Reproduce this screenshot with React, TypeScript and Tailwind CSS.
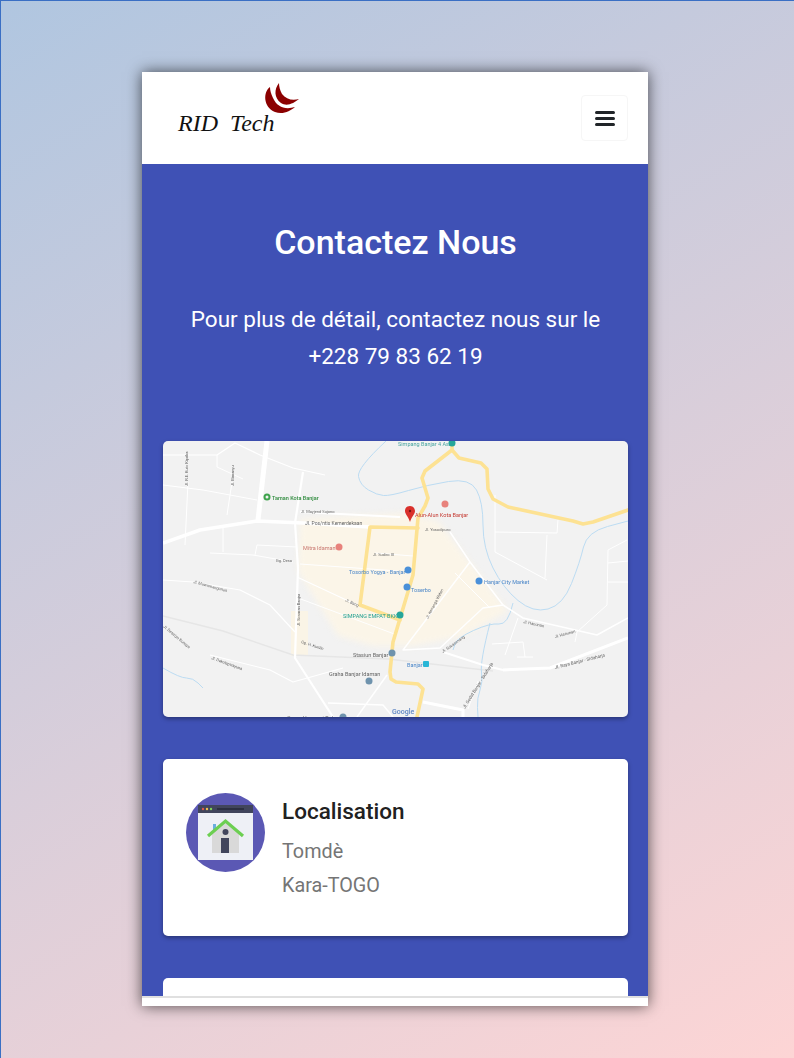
const roads: [string, number][] = [
  ['M0 102 L37 89 L94 80 L140 82 L207 86', 3.5],
  ['M104 0 L95 79', 5],
  ['M0 14 L54 14 L72 2 L97 14 L130 27 L162 34', 1.2],
  ['M54 14 L54 26 L80 38', 1],
  ['M137 71 L237 76', 2],
  ['M140 31 L132 82 L135 127 L132 217 L170 276', 2.2],
  ['M0 44 L40 49 L94 59', 1],
  ['M25 41 L22 104', 1],
  ['M69 41 L64 74', 1],
  ['M60 86 L60 111', 1],
  ['M47 112 L90 114 L130 121', 1],
  ['M92 114 L94 104 L134 106', 1],
  ['M0 139 L30 141 L77 149 L107 164 L132 191', 1.2],
  ['M134 136 L194 164', 1.2],
  ['M135 157 L234 194', 1],
  ['M47 214 L107 229 L130 241 L180 227', 1.2],
  ['M194 276 L224 234', 1.5],
  ['M165 262 L220 264 L230 276', 1.5],
  ['M137 123 L235 130', 1],
  ['M212 112 L250 115', 1],
  ['M260 261 L300 269 L300 276', 3],
  ['M287 91 L307 121 L340 164 L360 177 L434 194 L465 177', 1.5],
  ['M307 121 L240 209 L277 207 L320 167 L340 164', 1.4],
  ['M292 132 L327 167', 1],
  ['M280 211 L320 224 L340 229', 2],
  ['M340 229 L387 227 L465 197', 3],
  ['M332 54 L332 111 L384 139', 1],
  ['M332 91 L394 92 L395 79', 1],
  ['M384 94 L382 137', 1],
  ['M464 99 L445 109 L444 164 L414 191 L412 201', 1],
  ['M445 122 L465 120 M445 141 L465 141', 1],
  ['M355 177 L342 214 M329 203 L360 201 L362 216 M354 216 L370 216', 1],
  ['M315 240 L305 268', 1],
]

const highways: string[] = [
  'M289 0 L289 9 L262 30 L259 37 L265 57 L262 65 L255 77 L250 134 L230 201 L227 231 L228 238 L233 241 L255 243 L260 248 L254 276',
  'M289 9 L296 17 L318 22 L324 28 L325 48 L330 58 L345 66 L410 80 L420 83 L430 81 L465 69',
  'M255 87 L207 86 L197 164 L237 179',
]

type Pt = [number, number]

// rounds a polyline through the midpoints of its segments
function smooth(pts: Pt[]) {
  let d = `M${pts[0][0]} ${pts[0][1]}`
  for (let i = 1; i < pts.length - 1; i++) {
    const mx = (pts[i][0] + pts[i + 1][0]) / 2
    const my = (pts[i][1] + pts[i + 1][1]) / 2
    d += ` Q${pts[i][0]} ${pts[i][1]} ${mx} ${my}`
  }
  const last = pts[pts.length - 1]
  return `${d} L${last[0]} ${last[1]}`
}

const water: Pt[][] = [
  [[223, 0], [194, 27], [197, 44], [214, 54], [227, 55], [264, 44], [307, 37], [320, 61], [320, 107], [340, 147], [370, 172], [400, 164], [417, 121], [424, 91], [465, 80]],
  [[350, 162], [345, 184], [327, 182], [294, 197], [290, 209]],
  [[327, 182], [317, 221], [320, 241], [314, 257], [315, 276]],
  [[0, 227], [17, 237], [30, 237], [40, 247]],
]

// static map, real text labels
function MapImage() {
  return (
    <svg viewBox="0 0 465 276" className="block h-full w-full blur-[0.35px]">
      <rect width="465" height="276" fill="#f2f2f2" />
      <path d="M137 78 L240 72 L275 80 L345 170 L300 195 L250 205 L210 205 L175 195 L135 130Z" fill="#fbf5e8" className="blur-[3px]" />
      <path d="M128 170 L145 170 L145 215 L128 215Z" fill="#faf4e6" />
      <path d="M0 175 L60 190 L130 214 L225 218 L330 230" fill="none" stroke="#e6e6e6" strokeWidth="1.5" />
      {water.map((pts, i) => (
        <path key={i} d={smooth(pts)} fill="none" stroke="#bcdcf2" strokeWidth="1" />
      ))}
      {roads.map(([d, w], i) => (
        <path key={i} d={d} fill="none" stroke="#ffffff" strokeWidth={w} strokeLinejoin="round" />
      ))}
      {highways.map((d, i) => (
        <path key={i} d={d} fill="none" stroke="#fde293" strokeWidth="3.6" strokeLinecap="round" strokeLinejoin="round" />
      ))}
      <g fontFamily="Roboto, sans-serif" fontSize="5" fill="#666666">
        <text x="142" y="84">Jl. Pos/ntis Kemerdekaan</text>
        <text x="138" y="72" fontSize="4">Jl. Mayjend Sujono</text>
        <text x="113" y="121" fontSize="4">Gg. Desa</text>
        <text x="262" y="90" fontSize="4">Jl. Yosodipuro</text>
        <text x="210" y="115" fontSize="4">Jl. Sudiro III</text>
        <text x="360" y="182" fontSize="4" transform="rotate(12 360 182)">Jl. Hanunan</text>
        <text x="392" y="197" fontSize="4" transform="rotate(-15 392 197)">Jl. Hanunan</text>
        <text x="392" y="228" fontSize="4.5" transform="rotate(-14 392 228)">Jl. Raya Banjar - Sidaharja</text>
        <text x="302" y="268" fontSize="4.5" transform="rotate(-58 302 268)">Jl. Gedal Banjar - Sidaharja</text>
        <text x="30" y="142" fontSize="4" transform="rotate(15 30 142)">Jl. Mawamangunan</text>
        <text x="48" y="218" fontSize="4" transform="rotate(20 48 218)">Jl. Dakulaptrayuna</text>
        <text x="0" y="186" fontSize="4" transform="rotate(40 0 186)">Jl. Desatyo Bunaya</text>
        <text x="25" y="45" fontSize="4" transform="rotate(-90 25 45)">Jl. R.E. Kuto Kiprika</text>
        <text x="71" y="45" fontSize="4" transform="rotate(-90 71 45)">Jl. Bimanyu</text>
        <text x="137" y="185" fontSize="4" transform="rotate(-90 137 185)">Jl. Sosaran Banjar</text>
        <text x="138" y="202" fontSize="4" transform="rotate(18 138 202)">Gg. H. Kurdin</text>
        <text x="182" y="160" fontSize="4" transform="rotate(25 182 160)">Jl. Bang</text>
        <text x="265" y="178" fontSize="4" transform="rotate(-62 265 178)">Jl. Kenanga Wetan</text>
        <text x="280" y="212" fontSize="4" transform="rotate(-35 280 212)">Jl. Sukasenang</text>
      </g>
      <g fontFamily="Roboto, sans-serif" fontSize="5.5">
        <text x="109" y="59" fill="#2e8b3d" fontWeight="500">Taman Kota Banjar</text>
        <text x="140" y="109" fill="#c9766f">Mitra Idaman</text>
        <text x="186" y="133" fill="#4a86c8">Tosorbo Yogya - Banjar</text>
        <text x="180" y="177" fill="#1f9e8f">SIMPANG EMPAT BKK</text>
        <text x="190" y="216" fill="#666666">Stasiun Banjar</text>
        <text x="166" y="235" fill="#666666">Graha Banjar Idaman</text>
        <text x="124" y="279" fill="#666666">Green Harmoni Bahari</text>
        <text x="252" y="76" fill="#c53a32">Alun-Alun Kota Banjar</text>
        <text x="321" y="143" fill="#4a86c8">Hanjar City Market</text>
        <text x="248" y="151" fill="#4a86c8">Toserbo</text>
        <text x="244" y="226" fill="#4a86c8">Banjar</text>
        <text x="235" y="5" fill="#4aa5a0">Simpang Banjar 4 Ase</text>
      </g>
      <text x="229" y="273" fontFamily="Roboto, sans-serif" fontSize="7" fontWeight="500" fill="#5f86c4">Google</text>
      <circle cx="104" cy="56" r="3.500" fill="#3fa34d" />
      <circle cx="104" cy="56" r="1.500" fill="#f2f2f2" />
      <circle cx="176" cy="106" r="3.500" fill="#e8827c" />
      <circle cx="282" cy="63" r="3.500" fill="#e8827c" />
      <circle cx="244" cy="146" r="3.500" fill="#4a90d9" />
      <circle cx="316" cy="140" r="3.500" fill="#4a90d9" />
      <circle cx="245" cy="129" r="3.500" fill="#4a90d9" />
      <circle cx="237" cy="174" r="3.500" fill="#26a69a" />
      <circle cx="229" cy="212" r="3.500" fill="#6f93ad" />
      <circle cx="206" cy="240" r="3.500" fill="#6f93ad" />
      <circle cx="180" cy="276" r="3.500" fill="#6f93ad" />
      <circle cx="289" cy="2" r="3.500" fill="#26a69a" />
      <rect x="260" y="220" width="6" height="6" rx="1" fill="#29b6d6" />
      <path d="M247 65 C243 65 242 68 242 70 C242 73 245.500 76 247 81 C248.500 76 252 73 252 70 C252 68 250.500 65 247 65Z" fill="#d9302b" />
      <circle cx="247" cy="70" r="1.200" fill="#7a1512" />
    </svg>
  )
}

function HouseIcon() {
  return (
    <svg viewBox="0 0 79 79" className="h-[79px] w-[79px] shrink-0">
      <circle cx="39.500" cy="39.500" r="39.500" fill="#5b58b4" />
      <rect x="12" y="12" width="55" height="55" fill="#eef0f6" />
      <rect x="12" y="12" width="55" height="8" fill="#41455c" />
      <circle cx="17" cy="16" r="1.200" fill="#e05a4d" />
      <circle cx="21" cy="16" r="1.200" fill="#f2c14e" />
      <circle cx="25" cy="16" r="1.200" fill="#7ed35b" />
      <rect x="31" y="15" width="27" height="2" fill="#2c2f42" />
      <rect x="27" y="31" width="3" height="6" fill="#6aaede" />
      <path d="M26 40 L39.500 29 L53 40 V60 H26Z" fill="#d9d9d9" />
      <path d="M22 43 L39.500 28 L57 43" fill="none" stroke="#6ccf52" strokeWidth="3.200" />
      <circle cx="39.500" cy="39" r="3" fill="#41455c" />
      <rect x="35" y="45" width="8" height="15" fill="#41455c" />
    </svg>
  )
}

function Logo() {
  return (
    <div className="relative h-[60px] w-[130px]">
      <svg viewBox="0 0 40 36" className="absolute left-[85px] top-[-5px] h-[36px] w-[40px]">
        <path d="M7 4 C0 9 0 24 12 29 C20 32 27 28 32 24 C22 27 14 24 10 15 C8 11 7 7 7 4Z" fill="#8b0000" />
        <path d="M16 0 C11 6 11 15 18 20 C24 24 31 20 36 16 C29 18 23 16 19 11 C17 7 16 4 16 0Z" fill="#8b0000" />
      </svg>
      <p className="absolute left-0 top-[20px] whitespace-pre font-['Liberation_Serif',serif] text-[24px] italic leading-[30px] text-[#111111]">
        RID  Tech
      </p>
    </div>
  )
}

export default function App() {
  return (
    <div className="flex h-[1058px] w-[794px] overflow-hidden border-l border-t border-[#3a6fc4] bg-[linear-gradient(150deg,#b0c6e0_0%,#fdd5d5_100%)] pl-[141px] pt-[71px] font-['Roboto',sans-serif]">
      <div className="flex h-[934px] w-[506px] flex-col overflow-hidden bg-white shadow-[0_0_14px_rgba(0,0,0,0.65)]">
        <header className="flex h-[92px] shrink-0 items-center justify-between pl-[36px] pr-[20px]">
          <Logo />
          <button className="flex h-[46px] w-[47px] flex-col items-center justify-center gap-[3px] rounded border border-[#f6f6f6]">
            <span className="h-[3px] w-[20px] rounded-sm bg-[#212529]" />
            <span className="h-[3px] w-[20px] rounded-sm bg-[#212529]" />
            <span className="h-[3px] w-[20px] rounded-sm bg-[#212529]" />
          </button>
        </header>
        <main className="min-h-0 flex-1 overflow-hidden bg-[#3f51b5] pl-[21px] pr-[20px] pt-[58px]">
          <h1 className="text-center text-[34px] font-medium leading-[41px] text-white">Contactez Nous</h1>
          <p className="mt-[38px] text-center text-[22.5px] leading-[37px] text-white">
            Pour plus de détail, contactez nous sur le
            <br />
            +228 79 83 62 19
          </p>
          <div className="mt-[66px] h-[276px] overflow-hidden rounded-[5px] shadow-[0_2px_4px_rgba(0,0,0,0.35)]">
            <MapImage />
          </div>
          <section className="mt-[42px] flex h-[177px] gap-[17px] rounded-[5px] bg-white pl-[23px] pt-[34px] shadow-[0_2px_4px_rgba(0,0,0,0.35)]">
            <HouseIcon />
            <div>
              <h2 className="mt-[3px] text-[22.5px] font-medium leading-[30px] text-[#212121]">Localisation</h2>
              <p className="mt-[9px] text-[19.8px] leading-[34px] text-[#757575]">Tomdè</p>
              <p className="text-[19.8px] leading-[34px] text-[#757575]">Kara-TOGO</p>
            </div>
          </section>
          <section className="mt-[42px] h-[177px] rounded-[5px] bg-white" />
        </main>
        <footer className="h-[10px] shrink-0 border-t-2 border-[#e0e0e0] bg-white" />
      </div>
    </div>
  )
}
